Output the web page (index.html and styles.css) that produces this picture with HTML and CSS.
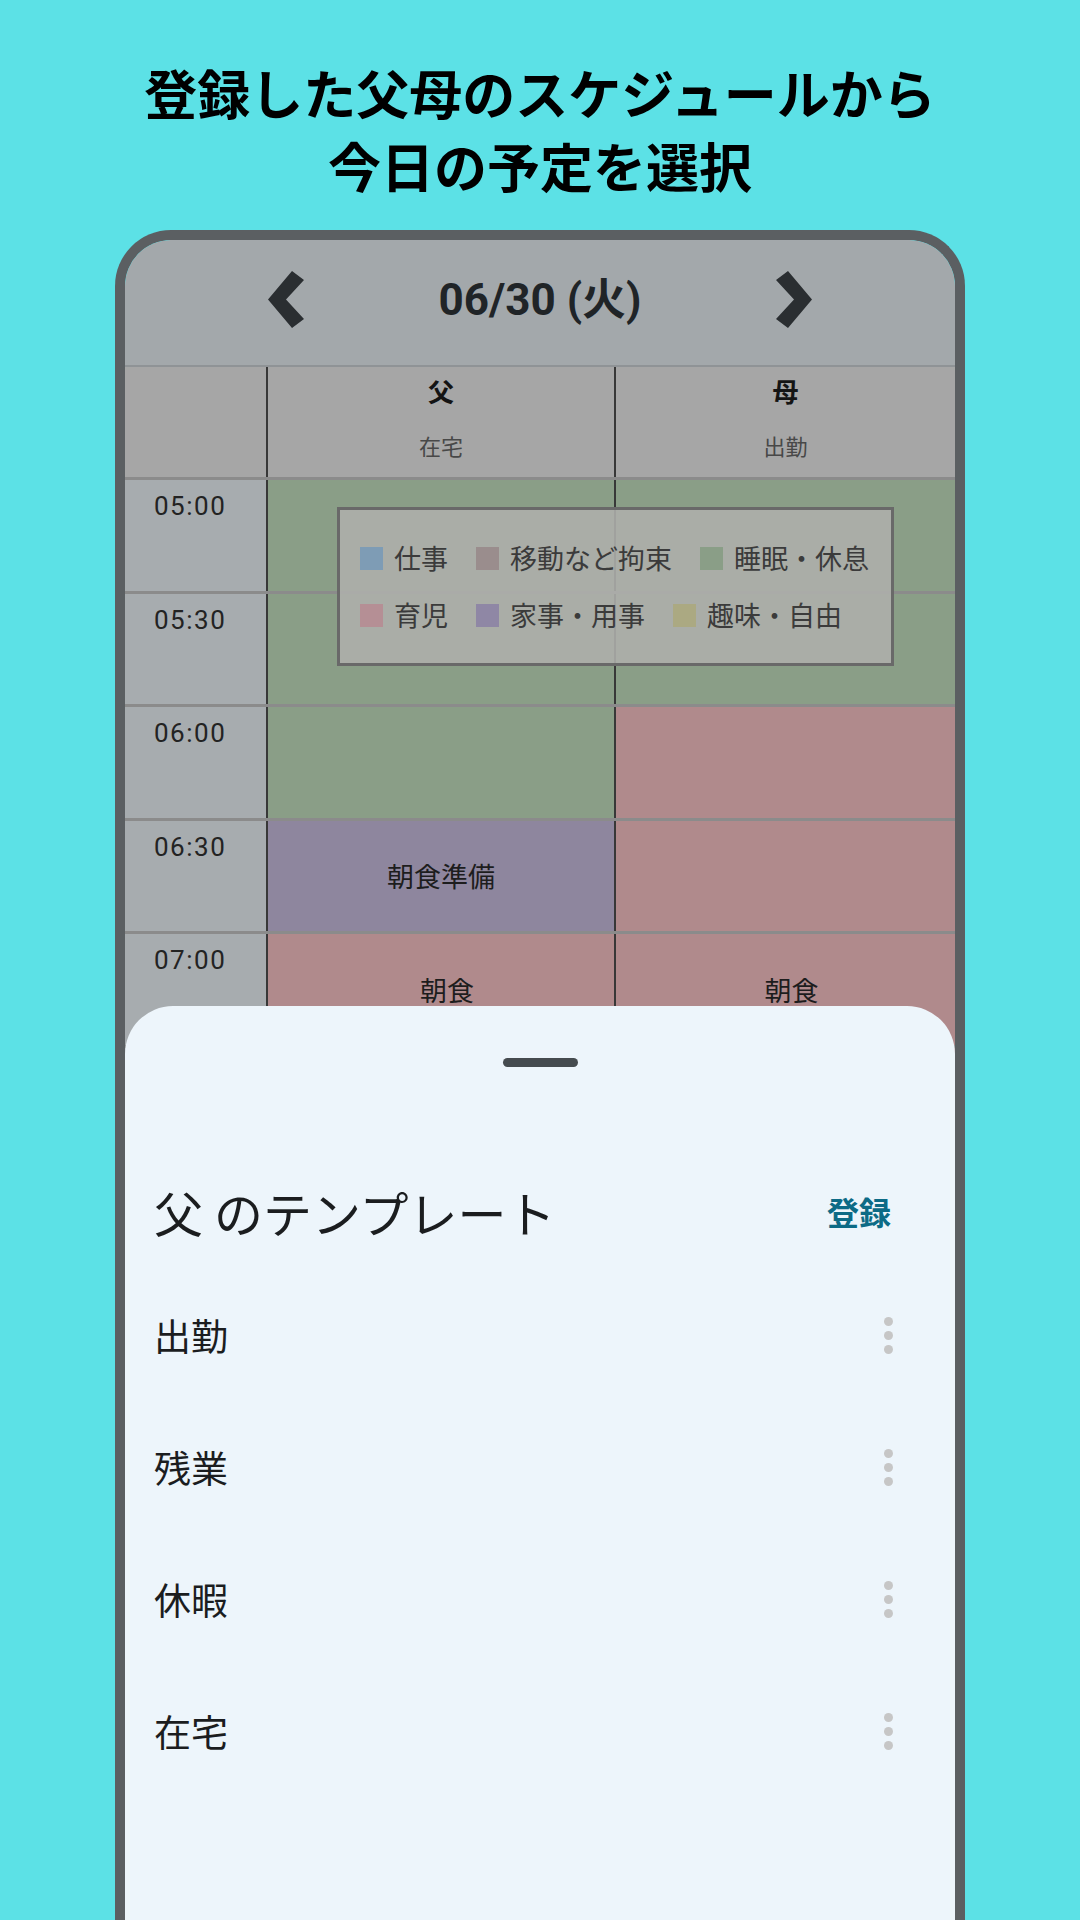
FILE: index.html
```html
<!DOCTYPE html>
<html lang="ja">
<head>
<meta charset="utf-8">
<title>テンプレート選択</title>
<link rel="stylesheet" href="styles.css">
</head>
<body>
<h1 class="headline">登録した父母のスケジュールから<br>今日の予定を選択</h1>
<div class="phone">
  <div class="screen">
    <header class="topbar">
      <svg class="chev" viewBox="0 0 36 57" width="36" height="57"><polygon points="24,0 36,9 18,28.5 36,48 24,57 0,28.5" fill="#2a2e31"/></svg>
      <div class="date">06/30 (火)</div>
      <svg class="chev" viewBox="0 0 36 57" width="36" height="57"><polygon points="12,0 0,9 18,28.5 0,48 12,57 36,28.5" fill="#2a2e31"/></svg>
    </header>

    <div class="grid">
      <div class="row head">
        <div class="cell"></div>
        <div class="cell name"><span class="who">父</span><span class="tpl">在宅</span></div>
        <div class="cell name"><span class="who">母</span><span class="tpl">出勤</span></div>
      </div>
      <div class="row">
        <div class="cell time">05:00</div>
        <div class="cell block sleep"></div>
        <div class="cell block sleep"></div>
      </div>
      <div class="row">
        <div class="cell time">05:30</div>
        <div class="cell block sleep"></div>
        <div class="cell block sleep"></div>
      </div>
      <div class="row">
        <div class="cell time">06:00</div>
        <div class="cell block sleep"></div>
        <div class="cell block child"></div>
      </div>
      <div class="row">
        <div class="cell time">06:30</div>
        <div class="cell block chore">朝食準備</div>
        <div class="cell block child"></div>
      </div>
      <div class="row">
        <div class="cell time">07:00</div>
        <div class="cell block child shift">朝食</div>
        <div class="cell block child shift">朝食</div>
      </div>
      <div class="row">
        <div class="cell time">07:30</div>
        <div class="cell block child"></div>
        <div class="cell block child"></div>
      </div>
    </div>

    <div class="legend">
      <div class="item"><span class="swatch sw-work"></span>仕事</div>
      <div class="item"><span class="swatch sw-move"></span>移動など拘束</div>
      <div class="item"><span class="swatch sw-sleep"></span>睡眠・休息</div>
      <div class="item"><span class="swatch sw-child"></span>育児</div>
      <div class="item"><span class="swatch sw-chore"></span>家事・用事</div>
      <div class="item"><span class="swatch sw-hobby"></span>趣味・自由</div>
    </div>

    <section class="sheet">
      <div class="handle"></div>
      <div class="sheet-title">
        <h2>父 のテンプレート</h2>
        <span class="register">登録</span>
      </div>
      <ul class="templates">
        <li><span>出勤</span><span class="more"><i></i><i></i><i></i></span></li>
        <li><span>残業</span><span class="more"><i></i><i></i><i></i></span></li>
        <li><span>休暇</span><span class="more"><i></i><i></i><i></i></span></li>
        <li><span>在宅</span><span class="more"><i></i><i></i><i></i></span></li>
      </ul>
    </section>
  </div>
</div>
</body>
</html>
```
FILE: styles.css
```css
html, body {
  margin: 0;
  padding: 0;
}
body {
  width: 1080px;
  height: 1920px;
  overflow: hidden;
  background: #5ce1e6;
  font-family: "Noto Sans CJK JP", "Noto Sans", sans-serif;
}
.headline {
  margin: 0;
  padding-top: 56px;
  font-size: 53px;
  line-height: 73px;
  font-weight: 700;
  text-align: center;
  color: #000;
}
.phone {
  margin: 28px auto 0;
  width: 850px;
  height: 1720px;
  box-sizing: border-box;
  border: 10px solid #5b5f62;
  border-bottom: 0;
  border-radius: 56px 56px 0 0;
  overflow: hidden;
}
.screen {
  position: relative;
  height: 100%;
  background: #a3a8ab;
  border-radius: 46px 46px 0 0;
  overflow: hidden;
}
.topbar {
  height: 125px;
  box-sizing: border-box;
  padding-bottom: 6px;
  display: flex;
  align-items: center;
  justify-content: center;
  gap: 134px;
}
.chev {
  display: block;
}
.date {
  font-family: Roboto, "Noto Sans CJK JP", sans-serif;
  font-size: 44px;
  font-weight: 700;
  line-height: 1;
  color: #202427;
}
.row {
  display: grid;
  grid-template-columns: 141px 348px 1fr;
  height: 113.5px;
  box-sizing: border-box;
  border-top: 3px solid #8b8b8b;
}
.row.head {
  height: 112px;
  border-top: 2px solid #8f9396;
  background: #a6a6a6;
}
.cell + .cell {
  border-left: 2px solid #383838;
}
.name {
  display: flex;
  flex-direction: column;
  align-items: center;
}
.who {
  margin-top: 6px;
  font-size: 26px;
  line-height: 36px;
  font-weight: 700;
  color: #141414;
}
.tpl {
  margin-top: 21px;
  font-size: 22px;
  line-height: 30px;
  color: #484848;
}
.time {
  background: #a7acaf;
  padding: 11px 0 0 29px;
  font-family: Roboto, "Noto Sans CJK JP", sans-serif;
  font-size: 26px;
  line-height: 30px;
  letter-spacing: 1.5px;
  color: #232323;
}
.block {
  display: flex;
  align-items: center;
  justify-content: center;
  font-size: 27px;
  color: #1d1d1d;
}
.block.shift {
  padding-left: 12px;
}
.sleep { background: #8a9e87; }
.child { background: #b08a8c; }
.chore { background: #8e869e; }

.legend {
  position: absolute;
  left: 212px;
  top: 267px;
  width: 557px;
  box-sizing: border-box;
  border: 3px solid #696969;
  background: rgba(174, 175, 172, 0.885);
  padding: 33px 12px 33px 20px;
  display: flex;
  flex-wrap: wrap;
  column-gap: 28px;
  row-gap: 27px;
}
.item {
  display: flex;
  align-items: center;
  gap: 11px;
  font-size: 27px;
  line-height: 30px;
  color: #3b3b3b;
  white-space: nowrap;
}
.swatch {
  width: 23px;
  height: 23px;
  display: block;
}
.sw-work { background: #7e9cb5; }
.sw-move { background: #9a8d8d; }
.sw-sleep { background: #8a9e87; }
.sw-child { background: #b58f95; }
.sw-chore { background: #8f87a5; }
.sw-hobby { background: #aba982; }

.sheet {
  position: absolute;
  left: 0;
  right: 0;
  top: 766px;
  bottom: 0;
  background: #edf5fb;
  border-radius: 48px 48px 0 0;
}
.handle {
  width: 75px;
  height: 9px;
  margin: 52px auto 0;
  border-radius: 5px;
  background: #454b4f;
}
.sheet-title {
  margin-top: 104px;
  height: 80px;
  display: flex;
  align-items: center;
  justify-content: space-between;
  padding: 0 64px 0 29px;
}
.sheet-title h2 {
  margin: 0;
  font-size: 49px;
  font-weight: 400;
  color: #1b1d1f;
}
.register {
  font-size: 32px;
  font-weight: 700;
  color: #0d6b86;
}
.templates {
  list-style: none;
  margin: 18px 0 0;
  padding: 0;
}
.templates li {
  height: 132px;
  display: flex;
  align-items: center;
  justify-content: space-between;
  padding: 0 62px 0 29px;
  font-size: 37px;
  color: #1b1d1f;
}
.more {
  display: flex;
  flex-direction: column;
  gap: 5px;
}
.more i {
  display: block;
  width: 9px;
  height: 9px;
  border-radius: 50%;
  background: #c6c6c6;
}
```
